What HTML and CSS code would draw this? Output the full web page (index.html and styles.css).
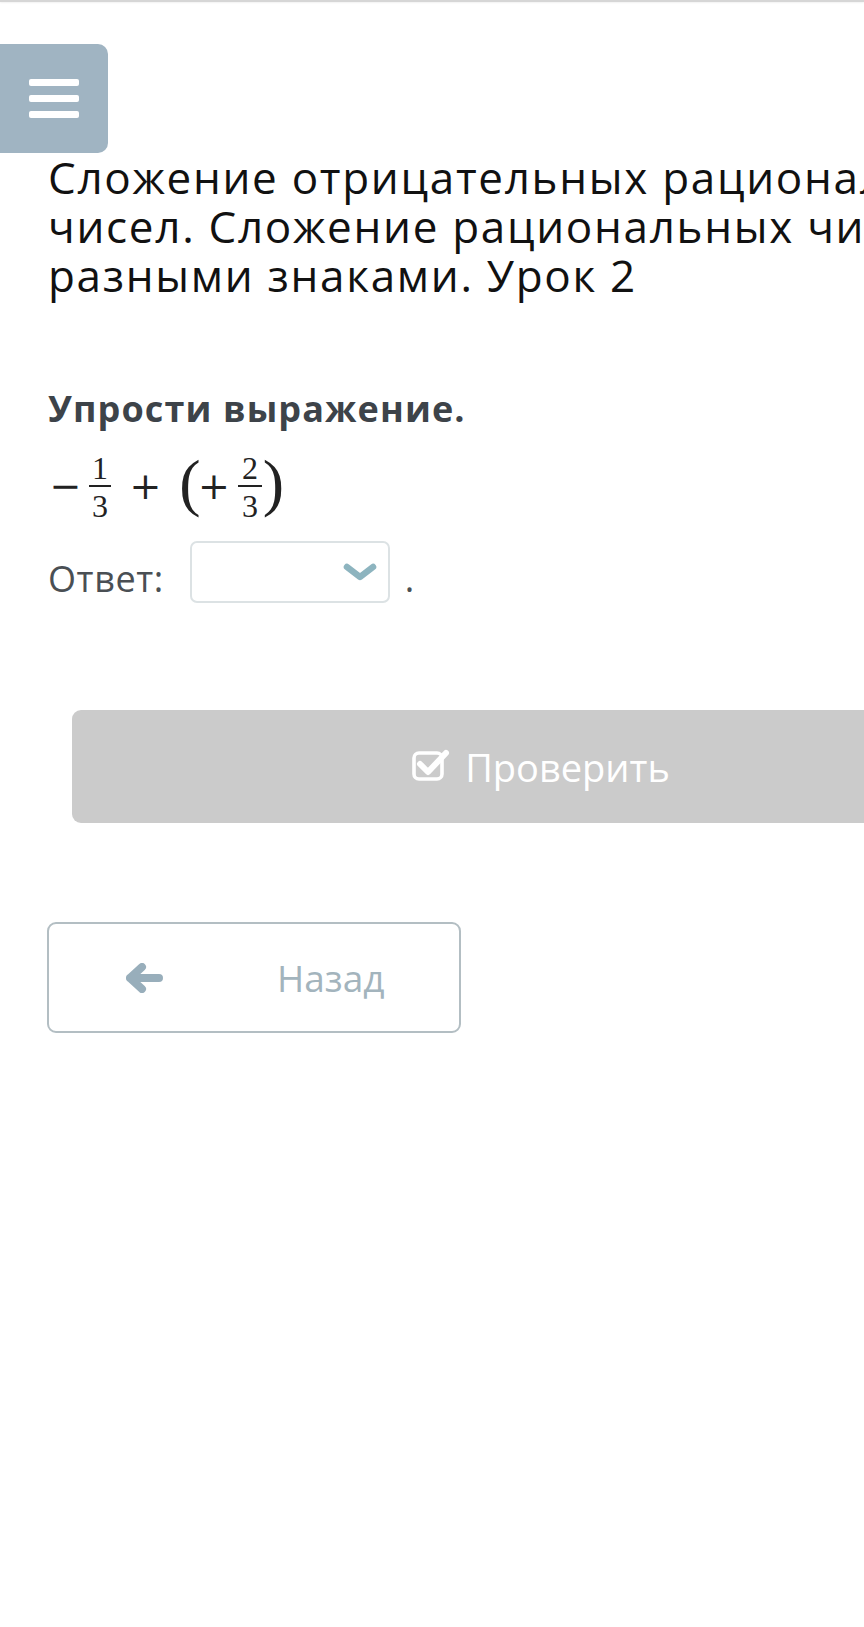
FILE: index.html
```html
<!DOCTYPE html>
<html lang="ru">
<head>
<meta charset="utf-8">
<link rel="stylesheet" href="styles.css">
</head>
<body>
<div class="page">
  <div class="topline"></div>
  <button class="menu" aria-label="Меню">
    <span class="bar"></span><span class="bar"></span><span class="bar"></span>
  </button>
  <h1 class="title"><span class="tl">Сложение отрицательных рациональных</span><span class="tl">чисел. Сложение рациональных чисел с</span><span class="tl">разными знаками. Урок 2</span></h1>

  <section class="task">
    <h2 class="task-head">Упрости выражение.</h2>
    <div class="math">
      <span class="m m-minus">−</span>
      <span class="m frac f1"><span class="num">1</span><span class="den">3</span></span>
      <span class="m m-plus">+</span>
      <span class="m paren lp">(</span>
      <span class="m m-plus2">+</span>
      <span class="m frac f2"><span class="num">2</span><span class="den">3</span></span>
      <span class="m paren rp">)</span>
    </div>
    <div class="answer">
      <span class="answer-label">Ответ:</span>
      <span class="select">
        <svg class="chev" viewBox="0 0 34 18" width="34" height="18"><path d="M4 4 L17 14 L30 4" fill="none" stroke="#8db4bf" stroke-width="6.5" stroke-linecap="round" stroke-linejoin="round"/></svg>
      </span>
      <span class="dot">.</span>
    </div>
  </section>

  <button class="check">
    <svg class="check-icon" viewBox="0 0 40 32" width="40" height="32"><rect x="3" y="4" width="28" height="26" rx="5" fill="none" stroke="#fff" stroke-width="3.6"/><path d="M9 15 L17 23 L35 4" fill="none" stroke="#fff" stroke-width="6" stroke-linecap="round" stroke-linejoin="round"/></svg>
    <span class="check-text">Проверить</span>
  </button>

  <button class="back">
    <svg class="arrow" viewBox="0 0 37 30" width="37" height="30"><path d="M4 15 L16 4 M4 15 L16 26 M4 15 L33 15" fill="none" stroke="#98aebb" stroke-width="8" stroke-linecap="round" stroke-linejoin="round"/></svg>
    <span class="back-text">Назад</span>
  </button>
</div>
</body>
</html>
```

FILE: styles.css
```css
html, body {
  margin: 0;
  padding: 0;
  background: #fff;
  overflow: hidden;
}
.page {
  width: 864px;
  min-height: 1627px;
  font-family: "Open Sans", "Noto Sans", sans-serif;
}
.topline {
  height: 2px;
  background: #d6d6d6;
  box-shadow: 0 1px 2px rgba(0,0,0,0.06);
}
.menu {
  display: flex;
  flex-direction: column;
  justify-content: center;
  gap: 9px;
  margin: 42px 0 0 0;
  width: 108px;
  height: 109px;
  padding: 0 0 0 29px;
  border: none;
  border-radius: 0 10px 10px 0;
  background: #a0b4c2;
}
.menu .bar {
  display: block;
  width: 50px;
  height: 7px;
  border-radius: 2px;
  background: #fff;
}
.title {
  margin: 0;
  padding-left: 48px;
  font-size: 44px;
  line-height: 49px;
  letter-spacing: 1.7px;
  font-weight: 400;
  color: #111;
  white-space: nowrap;
}
.tl { display: block; }
.task {
  padding-left: 48px;
}
.task-head {
  margin: 85px 0 0 0;
  font-size: 36px;
  line-height: 48px;
  letter-spacing: 1.1px;
  font-weight: 700;
  color: #3d4349;
}
.math {
  display: flex;
  align-items: center;
  height: 62px;
  margin-top: 23px;
  color: #222;
}
.m {
  display: inline-flex;
  justify-content: center;
  align-items: center;
  height: 62px;
  flex: none;
}
.m-minus, .m-plus, .m-plus2 {
  font-family: "DejaVu Serif", "Liberation Serif", serif;
  font-size: 38px;
  line-height: 1;
  padding-bottom: 2px;
  box-sizing: border-box;
}
.m-minus { width: 35px; }
.m-plus { width: 57px; }
.m-plus2 { width: 16px; }
.paren {
  font-family: "Liberation Serif", "DejaVu Serif", serif;
  font-size: 64px;
  line-height: 1;
  padding-bottom: 8px;
  box-sizing: border-box;
}
.lp { width: 32px; }
.rp { width: 15px; }
.frac {
  flex-direction: column;
  font-family: "Liberation Serif", "DejaVu Serif", serif;
  font-size: 32px;
  line-height: 1;
}
.f1 { width: 34px; }
.f2 { width: 44px; align-items: flex-start; padding-left: 16px; box-sizing: border-box; }
.frac .num {
  width: 22px;
  text-align: center;
  padding-bottom: 1px;
  border-bottom: 2.5px solid #222;
}
.f2 .num { width: 24px; }
.frac .den {
  width: 22px;
  text-align: center;
  padding-top: 3px;
}
.f2 .den { width: 24px; }
.answer {
  display: flex;
  align-items: flex-end;
  margin-top: 23px;
  height: 62px;
}
.answer-label {
  font-size: 36px;
  line-height: 49px;
  letter-spacing: 0.6px;
  color: #4a4f54;
  margin-right: 26px;
}
.select {
  width: 200px;
  height: 62px;
  box-sizing: border-box;
  border: 2px solid #dce2e4;
  border-radius: 7px;
  display: flex;
  align-items: center;
  justify-content: flex-end;
  padding-right: 11px;
}
.chev { display: block; }
.dot {
  font-size: 36px;
  line-height: 49px;
  color: #4a4f54;
  margin-left: 15px;
}
.check {
  display: flex;
  align-items: center;
  justify-content: center;
  gap: 14px;
  margin: 107px 0 0 72px;
  width: 937px;
  height: 113px;
  box-sizing: border-box;
  padding: 0;
  border: none;
  border-radius: 9px;
  background: #cbcbcb;
  color: #fff;
  font-family: "Open Sans", "Noto Sans", sans-serif;
  font-size: 38px;
}
.check-icon { display: block; margin-bottom: 4px; }
.back {
  display: flex;
  align-items: center;
  margin: 99px 0 0 47px;
  width: 414px;
  height: 111px;
  box-sizing: border-box;
  padding: 0 0 0 77px;
  border: 2px solid #b3bec3;
  border-radius: 9px;
  background: #fff;
  font-family: "Open Sans", "Noto Sans", sans-serif;
}
.arrow { display: block; }
.back-text {
  margin-left: 114px;
  font-size: 37px;
  color: #a3b4bd;
}
```
